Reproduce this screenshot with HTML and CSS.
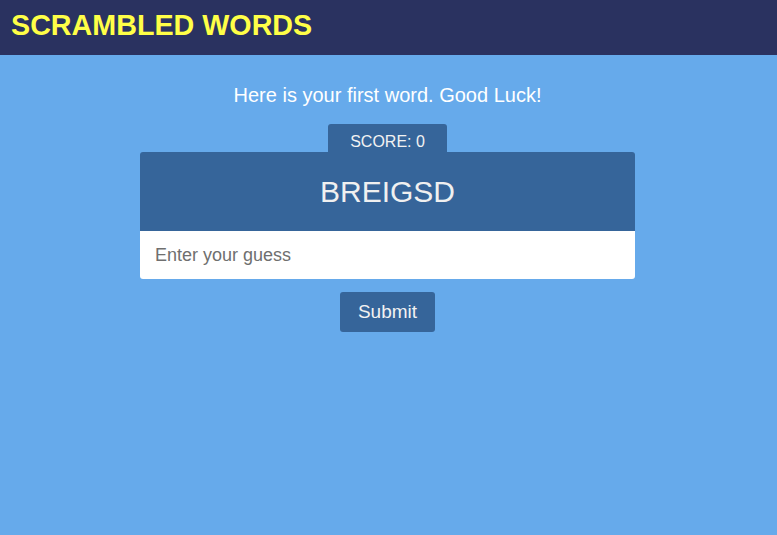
FILE: index.html
```html
<!DOCTYPE html>
<html>
<head>
<meta charset="utf-8">
<link rel="stylesheet" href="styles.css">
</head>
<body>
<header class="topbar">
  <h1 class="title">SCRAMBLED WORDS</h1>
</header>
<main class="main">
  <p class="intro">Here is your first word. Good Luck!</p>
  <div class="game">
    <div class="score">SCORE: 0</div>
    <div class="word">BREIGSD</div>
    <input class="guess" type="text" placeholder="Enter your guess">
    <button class="submit">Submit</button>
  </div>
</main>
</body>
</html>
```
FILE: styles.css
```css
html, body {
  margin: 0;
  padding: 0;
  height: 100%;
}
body {
  background: #66aaeb;
  font-family: "Liberation Sans", Arial, sans-serif;
  color: #f2f2f2;
}
.topbar {
  background: #2a3260;
  height: 55px;
  box-sizing: border-box;
  padding: 9px 11px 0;
}
.title {
  margin: 0;
  color: #ffff47;
  font-size: 28.7px;
  font-weight: bold;
  line-height: normal;
}
.main {
  display: flex;
  flex-direction: column;
  align-items: center;
  padding-right: 2px;
}
.intro {
  margin: 28px 0 0;
  font-size: 20px;
  line-height: 24px;
  color: #ffffff;
}
.game {
  margin-top: 17px;
  width: 495px;
  display: flex;
  flex-direction: column;
  align-items: center;
}
.score {
  width: 119px;
  height: 28px;
  background: #36659a;
  border-radius: 3px 3px 0 0;
  font-size: 16px;
  line-height: 36px;
  text-align: center;
  color: #f2f2f2;
}
.word {
  align-self: stretch;
  height: 79px;
  background: #36659a;
  border-radius: 3px 3px 0 0;
  font-size: 30px;
  line-height: 79px;
  text-align: center;
  color: #f0f0f0;
}
.guess {
  align-self: stretch;
  box-sizing: border-box;
  height: 48px;
  border: none;
  border-radius: 0 0 3px 3px;
  background: #ffffff;
  padding: 0 15px;
  font-family: "Liberation Sans", Arial, sans-serif;
  font-size: 18px;
  color: #333;
  outline: none;
}
.guess::placeholder {
  color: #6f6f6f;
}
.submit {
  margin-top: 13px;
  width: 95px;
  height: 40px;
  border: none;
  border-radius: 3px;
  background: #36659a;
  color: #f2f2f2;
  font-family: "Liberation Sans", Arial, sans-serif;
  font-size: 19px;
  padding: 0;
}
```
